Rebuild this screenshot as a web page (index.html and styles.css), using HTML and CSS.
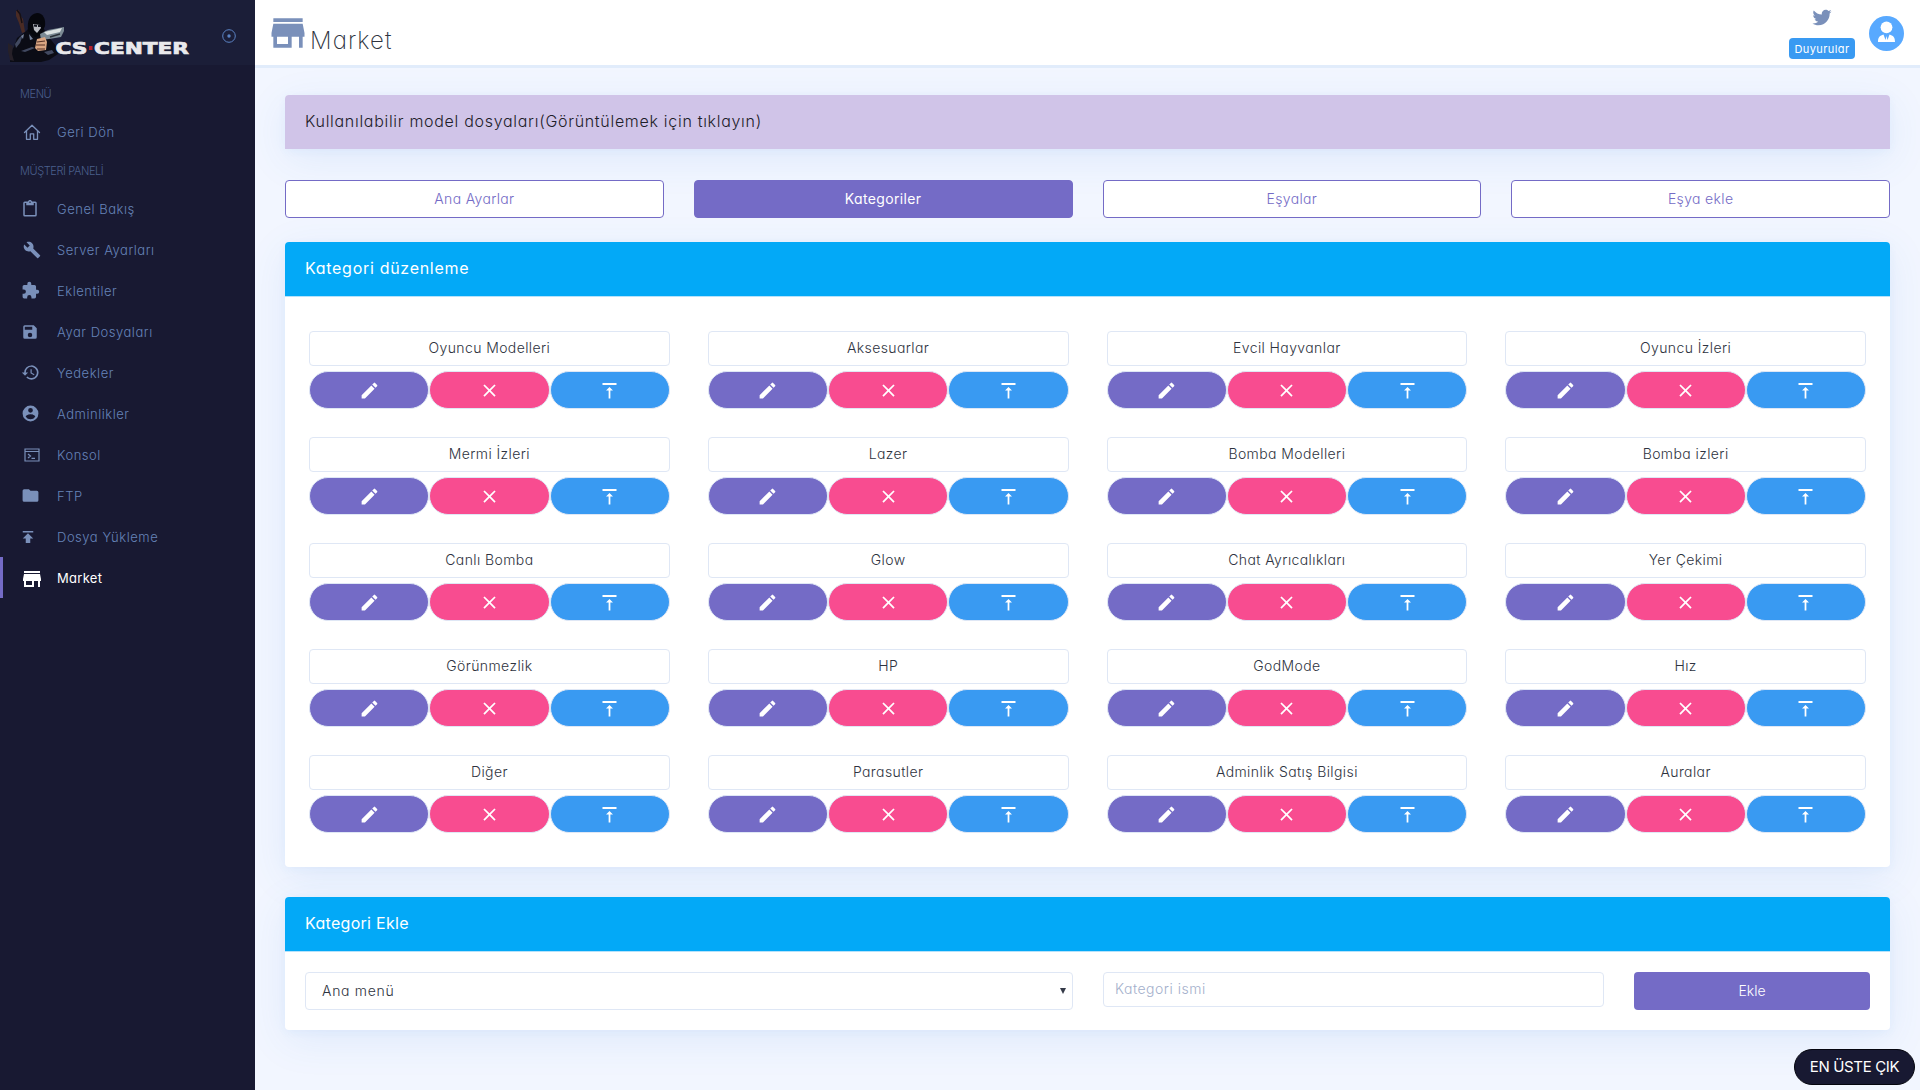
FILE: index.html
```html
<!DOCTYPE html>
<html lang="tr">
<head>
    <meta charset="UTF-8">
    <meta name="viewport" content="width=device-width, initial-scale=1.0">
    <title>Market</title>
    <link rel="stylesheet" href="styles.css">
</head>
<body>
    <!-- icons -->
    <svg class="hidden">
        <symbol id="home" viewBox="0 0 18 18"><path d="M1.500 9.500 9 2.200l7.500 7.300M3.500 8v8.300h3.800v-5.500h3.400v5.500h3.800V8" fill="none" stroke="currentColor" stroke-width="1.300" stroke-linejoin="round" stroke-linecap="round"/></symbol>
        <symbol id="clipboard" viewBox="0 0 24 24"><path d="M19 2h-4.200C14.400.8 13.300 0 12 0S9.600.8 9.200 2H5a2 2 0 0 0-2 2v16a2 2 0 0 0 2 2h14a2 2 0 0 0 2-2V4a2 2 0 0 0-2-2zm-7 0a1 1 0 1 1 0 2 1 1 0 0 1 0-2zm7 18H5V4h2v3h10V4h2v16z"/></symbol>
        <symbol id="wrench" viewBox="0 0 24 24"><path d="M22.700 19l-9.100-9.100c.9-2.300.4-5-1.500-6.900-2-2-5-2.400-7.400-1.300L9 6 6 9 1.600 4.700C.4 7.100.9 10.100 2.900 12.100c1.900 1.900 4.600 2.400 6.900 1.500l9.100 9.100c.4.4 1 .4 1.400 0l2.300-2.300c.5-.4.5-1.100.1-1.400z"/></symbol>
        <symbol id="puzzle" viewBox="0 0 24 24"><path d="M20.500 11H19V7a2 2 0 0 0-2-2h-4V3.500a2.500 2.500 0 0 0-5 0V5H4a2 2 0 0 0-2 2v3.800h1.500a2.700 2.700 0 0 1 0 5.400H2V20a2 2 0 0 0 2 2h3.800v-1.500a2.700 2.700 0 0 1 5.400 0V22H17a2 2 0 0 0 2-2v-4h1.500a2.500 2.500 0 0 0 0-5z"/></symbol>
        <symbol id="save" viewBox="0 0 24 24"><path d="M17 3H5a2 2 0 0 0-2 2v14a2 2 0 0 0 2 2h14a2 2 0 0 0 2-2V7l-4-4zm-5 16a3 3 0 1 1 0-6 3 3 0 0 1 0 6zm3-10H5V5h10v4z"/></symbol>
        <symbol id="history" viewBox="0 0 24 24"><path d="M13 3a9 9 0 0 0-9 9H1l3.900 3.900.1.100L9 12H6a7 7 0 1 1 2.100 4.900l-1.400 1.400A9 9 0 1 0 13 3zm-1 5v5l4.300 2.500.7-1.200-3.500-2.100V8H12z"/></symbol>
        <symbol id="account" viewBox="0 0 24 24"><path d="M12 2a10 10 0 1 0 0 20 10 10 0 0 0 0-20zm0 3a3 3 0 1 1 0 6 3 3 0 0 1 0-6zm0 14.200a7.200 7.200 0 0 1-6-3.200c0-2 4-3.100 6-3.100s6 1.100 6 3.100a7.200 7.200 0 0 1-6 3.200z"/></symbol>
        <symbol id="console" viewBox="0 0 16 14"><path d="M1 1h14v12H1zM1 3.500h14M4 6l2.500 2L4 10M7.500 10.400H11" fill="none" stroke="currentColor" stroke-width="1.200"/></symbol>
        <symbol id="folder" viewBox="0 0 24 24"><path d="M10 4H4a2 2 0 0 0-2 2v12a2 2 0 0 0 2 2h16a2 2 0 0 0 2-2V8a2 2 0 0 0-2-2h-8l-2-2z"/></symbol>
        <symbol id="upload" viewBox="0 0 24 24"><path d="M5 4v2h14V4H5zm0 10h4v6h6v-6h4l-7-7-7 7z"/></symbol>
        <symbol id="store" viewBox="0 0 24 24"><path d="M20 4H4v2h16V4zm1 10v-2l-1-5H4l-1 5v2h1v6h10v-6h4v6h2v-6h1zm-9 4H6v-4h6v4z"/></symbol>
        <symbol id="pencil" viewBox="0 0 24 24"><path d="M3 17.300V21h3.800L17.800 9.900l-3.700-3.700L3 17.300zM20.700 7c.4-.4.4-1 0-1.400l-2.300-2.300a1 1 0 0 0-1.400 0l-1.900 1.800 3.800 3.700L20.700 7z"/></symbol>
        <symbol id="close" viewBox="0 0 24 24"><path d="M19 6.400 17.600 5 12 10.600 6.400 5 5 6.400l5.600 5.600L5 17.600 6.400 19l5.600-5.600 5.600 5.600 1.400-1.400-5.600-5.600z"/></symbol>
        <symbol id="top" viewBox="0 0 24 24"><path d="M8 12h3v9h2v-9h3l-4-4-4 4zM4 3.500v2.300h16V3.500H4z"/></symbol>
        <symbol id="twitter" viewBox="0 0 24 24"><path d="M22.460 6c-.77.350-1.600.580-2.460.690.880-.530 1.560-1.370 1.880-2.380-.830.500-1.750.850-2.720 1.050C18.370 4.500 17.260 4 16 4c-2.350 0-4.270 1.920-4.270 4.290 0 .340.040.670.110.980C8.280 9.090 5.110 7.380 3 4.790c-.370.630-.580 1.370-.580 2.150 0 1.490.750 2.810 1.910 3.560-.710 0-1.370-.200-1.950-.500v.030c0 2.080 1.480 3.820 3.440 4.210a4.220 4.220 0 0 1-1.930.070 4.280 4.280 0 0 0 4 2.980 8.521 8.521 0 0 1-5.330 1.840c-.340 0-.680-.020-1.020-.060C3.440 20.290 5.700 21 8.120 21 16 21 20.330 14.460 20.330 8.790c0-.190 0-.370-.010-.560.840-.600 1.560-1.360 2.140-2.230z"/></symbol>
    </svg>

    <aside class="sidebar">
        <div class="brand">
            <svg class="logo" width="192" height="65" viewBox="0 0 192 65">
                <path d="M16 11l3-1 1 5 3 4 2 13-3 1-3-10-3-7z" fill="#4a2b24"/>
                <path d="M17 10l3 4 2 9" stroke="#171014" stroke-width="1.500" fill="none"/>
                <path d="M10 62l1-11 3-4 3-9 8-6 6-6 13 3 4 7 8 10 2 8-9 6-8 2z" fill="#0b0c15"/>
                <path d="M28 31c-1-9 1-17 9-18 6 0 9 6 8 13l-4 9-6 2z" fill="#06070d"/>
                <path d="M33 24l7 1 1 3-4 5-3-3z" fill="#b9bbc2"/>
                <path d="M34 25.500l3 .5m1 0h3" stroke="#10121c" stroke-width="2"/>
                <path d="M15 44l5-7 3-2-3 8-4 5zM21 51l11-4 3 1-10 4zM44 52l8-2 2 3-6 2z" fill="#414960"/>
                <path d="M21 36l3-2-1 5zM29 34l4 5-3 1z" fill="#76829b"/>
                <path d="M40 34l8-4 16-3v4l-3 6-12 2-8 1z" fill="#7b8a94"/>
                <path d="M44 32l18-4-2 4-13 3z" fill="#dbe1e1"/>
                <path d="M50 37l10-3" stroke="#2a3038" stroke-width="1.500"/>
                <path d="M37 39l8-2 2 5-1 8-8 1-3-3z" fill="#d9a582"/>
                <path d="M37 42l8-1m-9 4h9m-8 4h8" stroke="#543125" stroke-width="1.200"/>
                <path d="M8 43l5 3-1 8 2 7-4-1-2-9z" fill="#262028"/>
                <g class="logo-text">
                    <text x="55.500" y="53.800" textLength="32" lengthAdjust="spacingAndGlyphs">CS</text>
                    <text x="94" y="53.800" textLength="95" lengthAdjust="spacingAndGlyphs">CENTER</text>
                </g>
                <rect x="89" y="46" width="3.500" height="4" fill="#b5202c"/>
            </svg>
            <svg class="toggle" width="14" height="14" viewBox="0 0 14 14"><circle cx="7" cy="7" r="6.300" fill="none" stroke="currentColor"/><circle cx="7" cy="7" r="1.700"/></svg>
        </div>
        <nav>
            <p class="nav-title">MENÜ</p>
            <a class="nav-item"><svg class="i18"><use href="#home"/></svg><span>Geri Dön</span></a>
            <p class="nav-title">MÜŞTERİ PANELİ</p>
            <a class="nav-item"><svg><use href="#clipboard"/></svg><span>Genel Bakış</span></a>
            <a class="nav-item"><svg class="i18"><use href="#wrench"/></svg><span>Server Ayarları</span></a>
            <a class="nav-item"><svg class="puzzle"><use href="#puzzle"/></svg><span>Eklentiler</span></a>
            <a class="nav-item"><svg><use href="#save"/></svg><span>Ayar Dosyaları</span></a>
            <a class="nav-item"><svg class="puzzle"><use href="#history"/></svg><span>Yedekler</span></a>
            <a class="nav-item"><svg class="puzzle"><use href="#account"/></svg><span>Adminlikler</span></a>
            <a class="nav-item"><svg class="i16"><use href="#console"/></svg><span>Konsol</span></a>
            <a class="nav-item"><svg class="puzzle"><use href="#folder"/></svg><span>FTP</span></a>
            <a class="nav-item"><svg class="up"><use href="#upload"/></svg><span>Dosya Yükleme</span></a>
            <a class="nav-item active"><svg class="shop"><use href="#store"/></svg><span>Market</span></a>
        </nav>
    </aside>

    <div class="page">
        <header class="topbar">
            <svg class="title-icon"><use href="#store"/></svg>
            <h1>Market</h1>
            <div class="social">
                <svg><use href="#twitter"/></svg>
                <span class="badge">Duyurular</span>
            </div>
            <svg class="avatar" width="35" height="35" viewBox="0 0 35 35">
                <circle cx="17.500" cy="17.500" r="17.500" fill="#58a9ff"/>
                <circle cx="17.500" cy="11.300" r="5.900" fill="#fff"/>
                <path d="M9 26c0-5 2-6.500 5.500-7.500l2 5.500 1-4 1 4 2-5.500C24 19.500 26 21 26 26z" fill="#fff"/>
            </svg>
        </header>

        <main>
            <div class="card">
                <div class="card-header lilac">Kullanılabilir model dosyaları(Görüntülemek için tıklayın)</div>
            </div>

            <div class="tabs">
                <a class="tab">Ana Ayarlar</a>
                <a class="tab selected">Kategoriler</a>
                <a class="tab">Eşyalar</a>
                <a class="tab">Eşya ekle</a>
            </div>

            <div class="card">
                <div class="card-header blue">Kategori düzenleme</div>
                <div class="categories" id="categories"></div>
            </div>

            <div class="card">
                <div class="card-header blue add-title">Kategori Ekle</div>
                <div class="add-form">
                    <div class="select"><span>Ana menü</span><i class="caret"></i></div>
                    <input class="name" type="text" placeholder="Kategori ismi">
                    <button class="submit">Ekle</button>
                </div>
            </div>
        </main>
    </div>

    <a class="to-top">EN ÜSTE ÇIK</a>

    <script>
        const categories = [
            "Oyuncu Modelleri", "Aksesuarlar", "Evcil Hayvanlar", "Oyuncu İzleri",
            "Mermi İzleri", "Lazer", "Bomba Modelleri", "Bomba izleri",
            "Canlı Bomba", "Glow", "Chat Ayrıcalıkları", "Yer Çekimi",
            "Görünmezlik", "HP", "GodMode", "Hız",
            "Diğer", "Parasutler", "Adminlik Satış Bilgisi", "Auralar"
        ];

        document.getElementById('categories').innerHTML = categories.map(name => `
            <div class="category">
                <div class="category-name">${name}</div>
                <div class="actions">
                    <button class="edit"><svg><use href="#pencil"/></svg></button>
                    <button class="delete"><svg><use href="#close"/></svg></button>
                    <button class="move"><svg><use href="#top"/></svg></button>
                </div>
            </div>`).join('');
    </script>
</body>
</html>
```
FILE: styles.css
```css
* {
    box-sizing: border-box;
}
body {
    margin: 0;
    display: flex;
    height: 1090px;
    overflow: hidden;
    background-color: #f2f6ff;
    color: #2e3340;
    font-family: Inter, "Open Sans", sans-serif;
    font-feature-settings: "cv11";
    font-weight: 300;
    font-size: 14px;
}
svg {
    fill: currentColor;
    flex: none;
}
.hidden {
    position: absolute;
    width: 0;
    height: 0;
}

/* sidebar */
.sidebar {
    width: 255px;
    flex: none;
    background-color: #181932;
    color: #7a90ba;
}
.brand {
    display: flex;
    align-items: center;
    height: 65px;
    background-color: #1b1e38;
}
.logo-text {
    font-family: "DejaVu Sans", sans-serif;
    font-weight: bold;
    font-size: 16px;
    fill: #e9e9ec;
    stroke: #e9e9ec;
    stroke-width: .7px;
}
.toggle {
    margin: 7px 0 0 30px;
    color: #5b83c4;
}
nav {
    padding-top: 10px;
}
.nav-title {
    margin: 0;
    padding-left: 20px;
    height: 36px;
    line-height: 38px;
    font-size: 11px;
    letter-spacing: -.4px;
    color: #4a5f8c;
}
.nav-item {
    display: flex;
    align-items: center;
    height: 41px;
    padding-left: 20px;
    border-left: 3px solid transparent;
    font-size: 13px;
    letter-spacing: .53px;
    color: #6683b8;
}
.nav-item svg {
    width: 18px;
    height: 18px;
    margin-left: -2px;
    color: #7a90ba;
}
.nav-item span {
    padding-top: 1px;
    position: absolute;
    left: 57px;
}
.nav-item.active {
    border-left-color: #746bc6;
    color: #fff;
    font-weight: 400;
    letter-spacing: .3px;
}
.nav-item.active svg {
    color: #fff;
}
.nav-item .i18 {
    margin-left: 0;
}
.nav-item .puzzle {
    width: 19px;
    height: 19px;
}
.nav-item .i16 {
    width: 16px;
    height: 14px;
    margin-left: 1px;
}
.nav-item .up {
    margin-left: -4px;
}
.nav-item .shop {
    width: 24px;
    height: 24px;
    margin: 3px 0 0 -3px;
}

/* top bar */
.page {
    flex: 1;
}
.topbar {
    display: flex;
    height: 65px;
    padding-right: 16px;
    background-color: #fff;
    box-shadow: 0 3px 0 #e1ecfb;
}
.title-icon {
    width: 44px;
    height: 44px;
    margin: 11px 0 0 11px;
    color: #7a90ba;
}
h1 {
    margin: 22px 0 0;
    font-size: 24px;
    font-weight: 200;
    line-height: 38px;
    letter-spacing: 1.1px;
}
.social {
    display: flex;
    flex-direction: column;
    align-items: center;
    margin-left: auto;
    padding-top: 6px;
    color: #7a90ba;
}
.social svg {
    width: 22px;
    height: 22px;
}
.badge {
    width: 66px;
    height: 21px;
    margin-top: 10px;
    border-radius: 4px;
    background-color: #399af2;
    color: #fff;
    font-size: 11px;
    font-weight: 400;
    letter-spacing: .4px;
    line-height: 23px;
    text-align: center;
}
.avatar {
    margin: 16px 0 0 14px;
}

/* content */
main {
    padding: 30px;
}
.card {
    margin-bottom: 30px;
    border-radius: 4px;
    background-color: #fff;
    box-shadow: 0 10px 40px 0 rgba(62, 131, 220, .1), 0 2px 9px 0 rgba(62, 150, 230, .06);
}
.card-header {
    height: 55px;
    padding-left: 20px;
    border-radius: 4px 4px 0 0;
    font-size: 16px;
    letter-spacing: .7px;
    line-height: 53px;
}
.lilac {
    height: 54px;
    background-color: #d0c4e8;
    color: #1d2029;
}
.blue {
    border-bottom: 1px solid #b5e2fb;
    background-color: #03a9f7;
    color: #fff;
    font-weight: 400;
}
.add-title {
    letter-spacing: .3px;
}
.tabs {
    display: grid;
    grid-template-columns: repeat(4, 1fr);
    gap: 30px;
    margin: 31px 0 24px;
}
.tab {
    height: 38px;
    border: 1px solid #746bc6;
    border-radius: 4px;
    background-color: #fff;
    color: #746bc6;
    letter-spacing: .35px;
    line-height: 36px;
    text-align: center;
}
.tab.selected {
    background-color: #746bc6;
    color: #fff;
    font-weight: 400;
}
.categories {
    display: grid;
    grid-template-columns: repeat(4, 360.75px);
    column-gap: 38px;
    row-gap: 28px;
    padding: 34px 24px;
}
.category-name {
    height: 35px;
    margin-bottom: 5px;
    border: 1px solid #dfe7f5;
    border-radius: 4px;
    letter-spacing: .4px;
    line-height: 32px;
    text-align: center;
}
.actions {
    display: flex;
}
.actions button {
    flex: 1;
    display: flex;
    align-items: center;
    justify-content: center;
    height: 38px;
    padding: 0;
    border: 1px solid #dfe7f5;
    border-radius: 20px;
    color: #fff;
}
.actions svg {
    width: 21px;
    height: 21px;
}
.actions .edit {
    background-color: #746bc6;
}
.actions .delete {
    background-color: #f84c90;
}
.actions .move {
    background-color: #399af2;
}

/* add form */
.add-form {
    display: grid;
    grid-template-columns: 768px 501px 236px;
    gap: 30px;
    padding: 20px;
    height: 78px;
}
.select,
.name {
    border: 1px solid #dfe7f5;
    border-radius: 4px;
}
.select {
    display: flex;
    align-items: center;
    justify-content: space-between;
    padding: 0 6px 1px 16px;
    height: 38px;
    letter-spacing: .7px;
}
.caret {
    border: 3px solid transparent;
    border-top: 6px solid #353a48;
    border-bottom: 0;
}
.name {
    height: 35px;
    padding: 0 11px 2px;
    font: inherit;
    font-feature-settings: inherit;
    letter-spacing: .5px;
}
.name::placeholder {
    color: #a3afcb;
}
.submit {
    height: 38px;
    padding: 0 0 2px;
    border: 0;
    border-radius: 4px;
    background-color: #746bc6;
    color: #fff;
    font: inherit;
    font-feature-settings: inherit;
}
.to-top {
    position: fixed;
    right: 5px;
    bottom: 5px;
    width: 121px;
    height: 36px;
    border: 1px solid #05060f;
    border-radius: 18px;
    background-color: #181932;
    color: #fff;
    font-size: 15px;
    font-weight: 400;
    letter-spacing: -.35px;
    line-height: 34px;
    text-align: center;
}
```
